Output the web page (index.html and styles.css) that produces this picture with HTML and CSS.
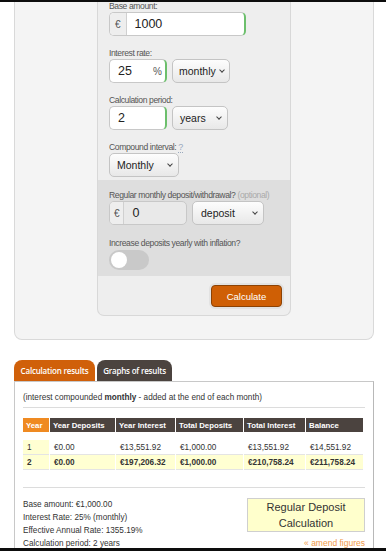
FILE: index.html
```html
<!DOCTYPE html>
<html lang="en">
<head>
    <meta charset="UTF-8">
    <meta name="viewport" content="width=device-width, initial-scale=1.0">
    <title>Compound Interest Calculator</title>
    <link rel="stylesheet" href="styles.css">
</head>
<body>
    <div class="frame-top"></div>

    <div class="calc-box">
        <form class="calc-panel" onsubmit="return false">
            <div class="field">
                <label>Base amount:</label>
                <div class="input-group wide valid">
                    <span class="addon">€</span>
                    <input type="text" value="1000">
                </div>
            </div>

            <div class="field">
                <label>Interest rate:</label>
                <div class="row">
                    <div class="input-group short valid">
                        <input type="text" value="25">
                        <span class="suffix">%</span>
                    </div>
                    <div class="select sel-rate">monthly <span class="chev"></span></div>
                </div>
            </div>

            <div class="field">
                <label>Calculation period:</label>
                <div class="row">
                    <div class="input-group short valid">
                        <input type="text" value="2">
                    </div>
                    <div class="select sel-period">years <span class="chev"></span></div>
                </div>
            </div>

            <div class="field last">
                <label>Compound interval: <a class="help" href="#">?</a></label>
                <div class="select sel-interval">Monthly <span class="chev"></span></div>
            </div>

            <div class="deposit-area">
                <div class="field">
                    <label>Regular monthly deposit/withdrawal? <span class="optional">(optional)</span></label>
                    <div class="row">
                        <div class="input-group mid">
                            <span class="addon">€</span>
                            <input type="text" value="0">
                        </div>
                        <div class="select sel-deposit">deposit <span class="chev"></span></div>
                    </div>
                </div>
                <div class="field last">
                    <label>Increase deposits yearly with inflation?</label>
                    <span class="toggle"><span class="knob"></span></span>
                </div>
            </div>

            <div class="actions">
                <button class="btn-calc">Calculate</button>
            </div>
        </form>
    </div>

    <div class="tabs">
        <span class="tab active">Calculation results</span>
        <span class="tab">Graphs of results</span>
    </div>

    <div class="results">
        <p class="note">(interest compounded <strong>monthly</strong> - added at the end of each month)</p>
        <hr>
        <table class="result-table">
            <thead>
                <tr>
                    <th class="c-year">Year</th>
                    <th class="c-yd">Year Deposits</th>
                    <th class="c-yi">Year Interest</th>
                    <th class="c-td">Total Deposits</th>
                    <th class="c-ti">Total Interest</th>
                    <th class="c-bal">Balance</th>
                </tr>
            </thead>
            <tbody>
                <tr class="spacer"><td colspan="6"></td></tr>
                <tr>
                    <td class="year">1</td>
                    <td>€0.00</td>
                    <td>€13,551.92</td>
                    <td>€1,000.00</td>
                    <td>€13,551.92</td>
                    <td>€14,551.92</td>
                </tr>
                <tr class="total">
                    <td class="year">2</td>
                    <td>€0.00</td>
                    <td>€197,206.32</td>
                    <td>€1,000.00</td>
                    <td>€210,758.24</td>
                    <td>€211,758.24</td>
                </tr>
            </tbody>
        </table>
        <hr class="hr-bottom">
        <div class="summary">
            <div class="summary-text">
                <div>Base amount: €1,000.00</div>
                <div>Interest Rate: 25% (monthly)</div>
                <div>Effective Annual Rate: 1355.19%</div>
                <div>Calculation period: 2 years</div>
            </div>
            <div class="summary-side">
                <div class="calc-type">Regular Deposit<br>Calculation</div>
                <a class="amend" href="#">« amend figures</a>
            </div>
        </div>
    </div>

    <div class="frame-bottom"></div>
</body>
</html>
```

FILE: styles.css
```css
body {
    margin: 0;
    padding: 0 12px 0 14px;
    font-family: "Liberation Sans", Arial, sans-serif;
    color: #333;
    background: #fff;
}
.frame-top,
.frame-bottom {
    position: fixed;
    left: 0;
    right: 0;
    background: #0d0d0d;
    z-index: 10;
}
.frame-top {
    top: 0;
    height: 2px;
}
.frame-bottom {
    bottom: 0;
    height: 3px;
}

/* calculator form */
.calc-box {
    background: #f4f4f4;
    border: 1px solid #d9d9d9;
    border-top: none;
    border-radius: 0 0 8px 8px;
    padding: 0 0 23px;
}
.calc-panel {
    width: 192px;
    margin: 0 auto;
    background: #eeeeee;
    border: 1px solid #d8d8d8;
    border-top: none;
    border-radius: 0 0 7px 7px;
}
.field {
    padding: 0 11px 11px;
}
.field.last {
    padding-bottom: 3px;
}
.field label {
    display: block;
    height: 12px;
    font-size: 8.6px;
    line-height: 12px;
    letter-spacing: -0.4px;
    color: #555;
    white-space: nowrap;
}
.help {
    color: #9aa9bd;
    text-decoration: none;
    border-bottom: 1px dotted #9aa9bd;
    font-size: 9px;
}
.optional {
    color: #aaa;
}
.row {
    display: flex;
    gap: 5px;
}
.input-group {
    display: flex;
    align-items: center;
    height: 22px;
    background: #fff;
    border: 1px solid #c8c8c8;
    border-radius: 5px;
    overflow: hidden;
}
.input-group.valid {
    border-right: 2px solid #6cbf6c;
}
.input-group.wide {
    width: 134px;
}
.input-group.short {
    width: 55px;
}
.input-group.mid {
    width: 76px;
    background: #e9e9e9;
}
.addon {
    width: 19px;
    height: 100%;
    display: flex;
    align-items: center;
    justify-content: center;
    border-right: 1px solid #d0d0d0;
    background: #eeeeee;
    font-size: 10px;
    color: #555;
}
.input-group input {
    border: none;
    outline: none;
    background: transparent;
    font-family: "Liberation Sans", Arial, sans-serif;
    font-size: 12.5px;
    color: #222;
    padding: 0 0 0 8px;
    width: 100%;
    min-width: 0;
}
.suffix {
    font-size: 10px;
    color: #555;
    padding-right: 3px;
}
.select {
    display: flex;
    align-items: center;
    justify-content: space-between;
    height: 22px;
    padding: 0 5px 0 7px;
    border: 1px solid #c4c4c4;
    border-radius: 5px;
    background: linear-gradient(#fdfdfd, #e8e8e8);
    font-size: 10.5px;
    color: #222;
    white-space: nowrap;
}
.chev {
    flex: none;
    width: 3px;
    height: 3px;
    border-right: 1px solid #444;
    border-bottom: 1px solid #444;
    transform: rotate(45deg);
    margin: 0 1px 2px 3px;
}
.sel-rate {
    width: 46px;
    padding: 0 4px 0 6px;
}
.sel-period {
    width: 42px;
    padding-left: 7px;
}
.sel-interval {
    width: 56px;
    padding-left: 7px;
}
.sel-deposit {
    width: 57px;
    padding-left: 8px;
}
.deposit-area {
    background: #dedede;
    padding-top: 9px;
    padding-bottom: 3px;
}
.deposit-area .field {
    padding-bottom: 12px;
}
.deposit-area .field.last {
    padding-bottom: 3px;
}
.toggle {
    display: block;
    width: 40px;
    height: 20px;
    margin-top: 1px;
    border-radius: 10px;
    background: #c9c9c9;
    position: relative;
}
.knob {
    position: absolute;
    left: 2px;
    top: 2px;
    width: 16px;
    height: 16px;
    border-radius: 50%;
    background: #fff;
}
.actions {
    display: flex;
    justify-content: flex-end;
    padding: 9px 8px 8px;
}
.btn-calc {
    width: 71px;
    height: 22px;
    background: #cf5f05;
    border: 1px solid #8c4204;
    border-radius: 4px;
    box-shadow: 0 0 0 2px #e2e2e2;
    color: #fff;
    font-family: "Liberation Sans", Arial, sans-serif;
    font-size: 9.5px;
    padding: 0;
}

/* results */
.tabs {
    display: flex;
    gap: 2px;
    margin-top: 20px;
    height: 21px;
}
.tab {
    display: flex;
    align-items: center;
    justify-content: center;
    height: 21px;
    border-radius: 8px 8px 0 0;
    background: #4b433f;
    color: #fff;
    font-family: "Open Sans", Arial, sans-serif;
    font-weight: 600;
    font-size: 8px;
    letter-spacing: -0.2px;
    width: 75px;
}
.tab.active {
    background: #d0600a;
    width: 81px;
}
.results {
    border: 1px solid #c8c8c8;
    border-right: 1px solid #b8b8b8;
    padding: 6px 8px 20px;
    font-size: 8.2px;
}
.note {
    margin: 4px 0 0;
    line-height: 12px;
    color: #333;
}
.results hr {
    border: none;
    border-top: 1px solid #dcdcdc;
    margin: 3px 0 0;
}
.result-table {
    table-layout: fixed;
    width: 342px;
    margin-top: 10px;
    margin-left: -1px;
    border-collapse: separate;
    border-spacing: 1px 0;
    font-size: 8.2px;
}
.result-table th {
    background: #4b433f;
    color: #fff;
    font-weight: bold;
    font-size: 7.8px;
    text-align: left;
    height: 14px;
    padding: 0 3px;
    white-space: nowrap;
    overflow: hidden;
}
.result-table th.c-year {
    background: #ef8a22;
    width: 20px;
}
.c-yd { width: 59px; }
.c-yi { width: 53px; }
.c-td { width: 61px; }
.c-ti { width: 55px; }
.c-bal { width: 51px; }
.result-table td {
    height: 14px;
    padding: 0 4px;
    border-bottom: 1px solid #e4e4e4;
    color: #333;
    white-space: nowrap;
}
.result-table .spacer td {
    height: 8px;
    border: none;
    padding: 0;
}
.result-table td.year {
    background: #ffffd2;
}
.result-table tr.total td {
    background: #ffffd2;
    font-weight: bold;
}
.results hr.hr-bottom {
    margin-top: 17px;
}
.summary {
    display: flex;
    justify-content: space-between;
    margin-top: 10px;
}
.summary-text {
    line-height: 13px;
    font-size: 8.2px;
    color: #333;
}
.summary-side {
    display: flex;
    flex-direction: column;
    align-items: flex-end;
    width: 118px;
}
.calc-type {
    width: 116px;
    height: 32px;
    border: 1px solid #cfcfcf;
    background: #ffffcc;
    text-align: center;
    font-size: 11px;
    line-height: 16px;
    color: #333;
}
.amend {
    margin-top: 6px;
    color: #f09a4a;
    text-decoration: none;
    font-size: 8.5px;
}
```
